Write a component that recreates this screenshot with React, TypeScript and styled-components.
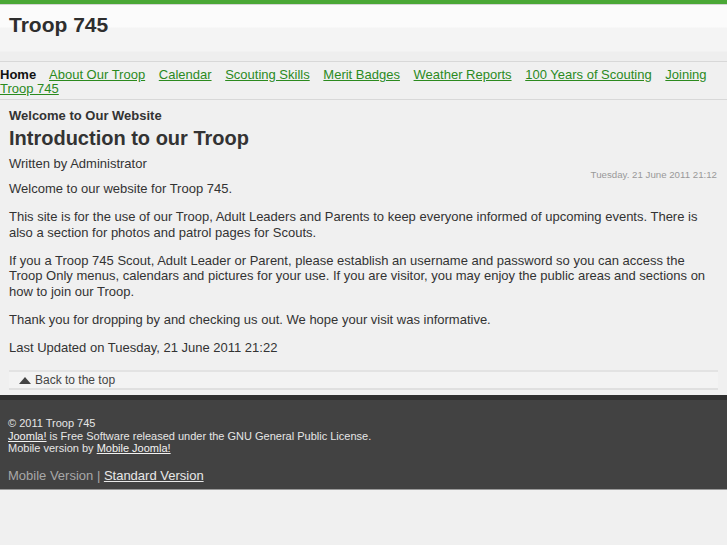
import * as React from 'react';
import styled, { createGlobalStyle } from 'styled-components';

const Global = createGlobalStyle`
  html, body {
    margin: 0;
    padding: 0;
    background: #f0f0f0;
    font-family: "Liberation Sans", Arial, sans-serif;
    color: #333;
  }
`

const TopStripe = styled.div`
  height: 4px;
  background: #4aa836;
  border-bottom: 1px solid #d4d4d4;
`

const Header = styled.header`
  background: linear-gradient(#fbfbfb 0, #fbfbfb 22px, #f4f4f4 23px, #f4f4f4 46px, #eeeeee 47px);
  height: 56px;
  border-bottom: 1px solid #d8d8d8;
  padding: 0 9px;
`

const SiteTitle = styled.h1`
  margin: 0;
  padding-top: 9px;
  font-size: 21px;
  font-weight: bold;
  color: #2e2e2e;
  line-height: 22px;
`

const Nav = styled.nav`
  padding: 6px 0 3px;
  font-size: 13px;
  line-height: 14px;
  border-bottom: 1px solid #d8d8d8;
`

const NavItem = styled.a<{ $active?: boolean }>`
  color: ${p => (p.$active ? '#111' : '#2b8a1e')};
  font-weight: ${p => (p.$active ? 'bold' : 'normal')};
  text-decoration: ${p => (p.$active ? 'none' : 'underline')};
  margin-right: 10px;
  &:last-child { margin-right: 0; }
`

const Main = styled.main`
  padding: 8px 9px 5px;
`

const Section = styled.div`
  font-size: 13px;
  font-weight: bold;
  line-height: 16px;
`

const ArticleTitle = styled.h2`
  margin: 2px 0 0;
  font-size: 20px;
  font-weight: bold;
  line-height: 24px;
`

const Author = styled.div`
  margin-top: 6px;
  font-size: 13px;
  line-height: 16px;
`

const Created = styled.div`
  text-align: right;
  font-size: 9.7px;
  color: #999;
  line-height: 10px;
  margin: -2px 1px 1px 0;
`

const Para = styled.p`
  margin: 0 0 12.5px;
  font-size: 13px;
  line-height: 15.5px;
`

const Modified = styled(Para)`
  margin-bottom: 15px;
`

const BackTop = styled.div`
  display: flex;
  align-items: center;
  gap: 4px;
  height: 16px;
  padding: 0 10px;
  background: #f3f3f3;
  border-top: 2px solid #e3e3e3;
  border-bottom: 2px solid #e0e0e0;
  font-size: 12px;
  color: #444;
`

const Footer = styled.footer`
  background: #424242;
  border-top: 5px solid #2f2f2f;
  border-bottom: 1px solid #9a9a9a;
  padding: 17px 8px 5px;
  color: #e6e6e6;
  font-size: 11px;
  line-height: 12.5px;
`

const FootLink = styled.a`
  color: #f2f2f2;
  text-decoration: underline;
`

const Versions = styled.div`
  margin-top: 13px;
  font-size: 13px;
  line-height: 16px;
  color: #a8a8a8;
`

const VersionLink = styled.a`
  color: #e8e8e8;
  text-decoration: underline;
`

const links = [
  'About Our Troop',
  'Calendar',
  'Scouting Skills',
  'Merit Badges',
  'Weather Reports',
  '100 Years of Scouting',
  'Joining Troop 745',
]

export default function App() {
  return (
    <>
      <Global />
      <TopStripe />
      <Header>
        <SiteTitle>Troop 745</SiteTitle>
      </Header>
      <Nav>
        <NavItem $active>Home</NavItem>{' '}
        {links.map(l => (
          <React.Fragment key={l}>
            <NavItem href="#">{l}</NavItem>{' '}
          </React.Fragment>
        ))}
      </Nav>
      <Main>
        <Section>Welcome to Our Website</Section>
        <ArticleTitle>Introduction to our Troop</ArticleTitle>
        <Author>Written by Administrator</Author>
        <Created>Tuesday. 21 June 2011 21:12</Created>
        <Para>Welcome to our website for Troop 745.</Para>
        <Para>
          This site is for the use of our Troop, Adult Leaders and Parents to keep everyone informed of upcoming events. There is also a section for photos and patrol pages for Scouts.
        </Para>
        <Para>
          If you a Troop 745 Scout, Adult Leader or Parent, please establish an username and password so you can access the Troop Only menus, calendars and pictures for your use. If you are visitor, you may enjoy the public areas and sections on how to join our Troop.
        </Para>
        <Para>Thank you for dropping by and checking us out. We hope your visit was informative.</Para>
        <Modified>Last Updated on Tuesday, 21 June 2011 21:22</Modified>
        <BackTop>
          <svg width="12" height="7" viewBox="0 0 12 7"><path d="M0 7 L6 0 L12 7 Z" fill="#444" /></svg>
          Back to the top
        </BackTop>
      </Main>
      <Footer>
        <div>© 2011 Troop 745</div>
        <div><FootLink href="#">Joomla!</FootLink> is Free Software released under the GNU General Public License.</div>
        <div>Mobile version by <FootLink href="#">Mobile Joomla!</FootLink></div>
        <Versions>
          Mobile Version | <VersionLink href="#">Standard Version</VersionLink>
        </Versions>
      </Footer>
    </>
  );
}
